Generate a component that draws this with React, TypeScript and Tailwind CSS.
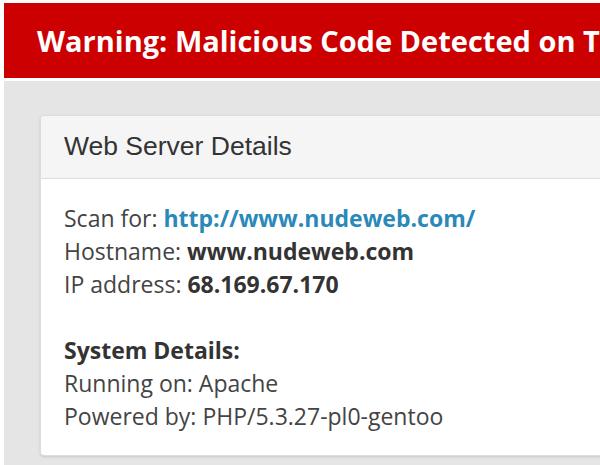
import React from 'react';

const App: React.FC = () => {
  return (
    <div className="w-[600px] h-[465px] overflow-hidden bg-white pt-[3px] pl-[4px]">
      <header className="bg-[#cc0000] h-[75px] flex items-center pl-[33px] whitespace-nowrap overflow-hidden">
        <h1 className="text-white font-bold text-[29px] font-['Open_Sans',sans-serif]">
          Warning: Malicious Code Detected on This Website
        </h1>
      </header>

      <main className="mt-[3px] bg-[#e5e5e5] pl-[36px] pt-[34px] pb-[8px] h-[400px]">
        <div className="w-[600px] bg-white border border-[#dddddd] rounded-[4px] shadow-sm">
          {/* Panel heading */}
          <div className="h-[63px] bg-[#f5f5f5] border-b border-[#dddddd] rounded-t-[4px] flex items-center px-[23px]">
            <h2 className="text-[26.5px] text-[#333333] font-['Liberation_Sans',Arial,sans-serif]">
              Web Server Details
            </h2>
          </div>

          <div className="px-[23px] pt-[23px] pb-[22px] text-[23px] leading-[33px] text-[#444444] font-['Open_Sans',sans-serif]">
            <p>
              Scan for: <a className="font-bold text-[#2a89b8]">http://www.nudeweb.com/</a>
            </p>
            <p>
              Hostname: <strong className="text-[#333333]">www.nudeweb.com</strong>
            </p>
            <p>
              IP address: <strong className="text-[#333333]">68.169.67.170</strong>
            </p>

            <p className="mt-[33px] font-bold text-[#333333]">System Details:</p>
            <p>Running on: Apache</p>
            <p>Powered by: PHP/5.3.27-pl0-gentoo</p>
          </div>
        </div>
      </main>
    </div>
  );
};

export default App;
